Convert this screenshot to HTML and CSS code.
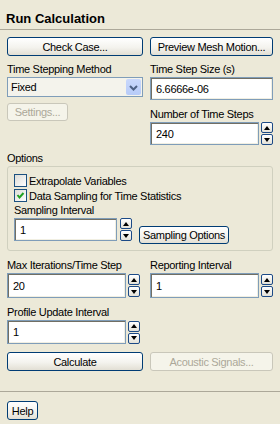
FILE: index.html
```html
<!DOCTYPE html>
<html lang="en">
<head>
    <meta charset="UTF-8">
    <meta name="viewport" content="width=device-width, initial-scale=1.0">
    <title>Run Calculation</title>
    <link rel="stylesheet" href="styles.css">
</head>
<body>
    <div class="panel">
        <h1 class="panel-title">Run Calculation</h1>

        <div class="panel-body">
            <div class="cols">
                <button class="btn">Check Case...</button>
                <button class="btn">Preview Mesh Motion...</button>
            </div>

            <div class="cols row-time">
                <div class="col">
                    <label class="field-label">Time Stepping Method</label>
                    <div class="combo">
                        <span class="combo-value">Fixed</span>
                        <span class="combo-arrow">
                            <svg width="15" height="17" viewBox="0 0 15 17">
                                <polyline points="4,7 7.5,10.5 11,7" fill="none" stroke="#4d6185" stroke-width="2"/>
                            </svg>
                        </span>
                    </div>
                    <button class="btn btn-settings" disabled>Settings...</button>
                </div>
                <div class="col">
                    <label class="field-label">Time Step Size (s)</label>
                    <input type="text" class="text-input input-full" value="6.6666e-06">
                    <label class="field-label label-steps">Number of Time Steps</label>
                    <div class="spin-field field-right">
                        <input type="text" class="text-input" value="240">
                        <span class="spinner"><span class="spin up"></span><span class="spin down"></span></span>
                    </div>
                </div>
            </div>

            <div class="field-label options-label">Options</div>
            <div class="group-box">
                <div class="check-row"><span class="checkbox"></span>Extrapolate Variables</div>
                <div class="check-row">
                    <span class="checkbox">
                        <svg width="11" height="11" viewBox="0 0 11 11">
                            <polyline points="2.5,5 4.5,7.5 8.5,3" fill="none" stroke="#21a121" stroke-width="2"/>
                        </svg>
                    </span>Data Sampling for Time Statistics
                </div>
                <label class="field-label label-sampling">Sampling Interval</label>
                <div class="sampling-row">
                    <div class="spin-field field-sampling">
                        <input type="text" class="text-input input-short" value="1">
                        <span class="spinner"><span class="spin up"></span><span class="spin down"></span></span>
                    </div>
                    <button class="btn btn-sampling">Sampling Options</button>
                </div>
            </div>

            <div class="cols row-iter">
                <div class="col">
                    <label class="field-label">Max Iterations/Time Step</label>
                    <div class="spin-field field-left">
                        <input type="text" class="text-input input-tall" value="20">
                        <span class="spinner"><span class="spin up"></span><span class="spin down"></span></span>
                    </div>
                </div>
                <div class="col">
                    <label class="field-label">Reporting Interval</label>
                    <div class="spin-field field-right">
                        <input type="text" class="text-input input-tall" value="1">
                        <span class="spinner"><span class="spin up"></span><span class="spin down"></span></span>
                    </div>
                </div>
            </div>

            <div class="row-profile">
                <label class="field-label">Profile Update Interval</label>
                <div class="spin-field field-left">
                    <input type="text" class="text-input input-mid" value="1">
                    <span class="spinner"><span class="spin up"></span><span class="spin down"></span></span>
                </div>
            </div>

            <div class="cols row-calc">
                <button class="btn">Calculate</button>
                <button class="btn" disabled>Acoustic Signals...</button>
            </div>
        </div>

        <div class="panel-footer">
            <button class="btn btn-help">Help</button>
        </div>
    </div>
</body>
</html>
```

FILE: styles.css
```css
body {
    margin: 0;
    background-color: #ece9d8;
    font-family: 'Liberation Sans', Arial, sans-serif;
    font-size: 11px;
    letter-spacing: -0.3px;
    color: #000;
}

.panel {
    width: 280px;
    height: 424px;
    overflow: hidden;
}

.panel-title {
    margin: 0;
    padding: 11px 6px 2px;
    font-size: 13px;
    line-height: 16px;
    font-weight: bold;
    letter-spacing: 0;
    border-bottom: 1px solid #aca899;
}

.panel-body {
    padding: 7px 7px 0;
}

.cols {
    display: grid;
    grid-template-columns: 136px 123px;
    column-gap: 7px;
}

.col {
    display: flex;
    flex-direction: column;
    align-items: flex-start;
}

/* buttons */
.btn {
    height: 19px;
    padding: 0;
    font: inherit;
    letter-spacing: inherit;
    color: #000;
    border: 1px solid #003c74;
    border-radius: 3px;
    background: linear-gradient(#ffffff, #f4f3ee 55%, #e2dfd4);
}

.btn:disabled {
    color: #aca899;
    border-color: #c9c7ba;
    background: #f5f4ea;
}

.btn-settings {
    width: 61px;
    height: 18px;
    margin-top: 6px;
}

.btn-sampling {
    width: 90px;
    height: 18px;
    margin-top: 8px;
    margin-left: 7px;
}

.btn-help {
    width: 31px;
}

/* labels and fields */
.field-label {
    display: block;
    line-height: 13px;
    margin-bottom: 1px;
}

.row-time {
    margin-top: 7px;
}

.label-steps {
    margin-top: 8px;
}

.text-input {
    box-sizing: border-box;
    height: 23px;
    margin: 0;
    padding: 0 0 0 5px;
    font: inherit;
    letter-spacing: inherit;
    color: #000;
    background: #fff;
    border: 1px solid #7f9db9;
    box-shadow: inset 1px 1px 0 #716f64, inset -1px -1px 0 #f1efe2;
    outline: none;
}

.input-full {
    width: 123px;
}

.input-tall {
    height: 25px;
}

.input-mid {
    height: 24px;
}

.combo {
    box-sizing: border-box;
    width: 136px;
    height: 20px;
    padding: 1px;
    display: flex;
    align-items: stretch;
    justify-content: space-between;
    background: #f4f3ec;
    border: 1px solid #7f9db9;
}

.combo-value {
    padding-left: 2px;
    line-height: 17px;
}

.combo-arrow {
    width: 15px;
    border-radius: 2px;
    background: linear-gradient(#c9d8fc, #b7cbf8);
}

.combo-arrow svg {
    display: block;
}

/* spin boxes */
.spin-field {
    display: flex;
    align-items: center;
    gap: 2px;
}

.spin-field .text-input {
    flex: 1;
    min-width: 0;
}

.field-left {
    width: 133px;
}

.field-right {
    width: 123px;
}

.field-sampling {
    width: 118px;
    gap: 3px;
    align-items: flex-start;
}

.spinner {
    width: 12px;
    display: flex;
    flex-direction: column;
    gap: 1px;
}

.spin {
    box-sizing: border-box;
    height: 11px;
    display: flex;
    align-items: center;
    justify-content: center;
    border: 1px solid #1c4a86;
    border-radius: 2px;
    background: linear-gradient(#ffffff, #e4e2d8);
}

.spin::before {
    content: '';
    border-left: 3px solid transparent;
    border-right: 3px solid transparent;
}

.spin.up::before {
    border-bottom: 4px solid #000;
}

.spin.down::before {
    border-top: 4px solid #000;
}

/* options group */
.options-label {
    margin-top: 7px;
}

.group-box {
    padding: 6px 0 6px 6px;
    border: 1px solid #d0d0bf;
    border-radius: 3px;
}

.check-row {
    height: 15px;
    display: flex;
    align-items: center;
    gap: 2px;
}

.checkbox {
    box-sizing: border-box;
    width: 13px;
    height: 13px;
    border: 1px solid #1c5180;
    background: linear-gradient(135deg, #dcdcd7, #ffffff);
}

.checkbox svg {
    display: block;
}

.label-sampling {
    margin-top: 1px;
}

.sampling-row {
    display: flex;
    align-items: flex-start;
}

.input-short {
    height: 23px;
}

.row-iter {
    margin-top: 8px;
}

.row-profile {
    margin-top: 8px;
}

.row-calc {
    margin-top: 8px;
}

.panel-footer {
    margin-top: 20px;
    padding: 9px 7px 0;
    border-top: 1px solid #aca899;
}
```
